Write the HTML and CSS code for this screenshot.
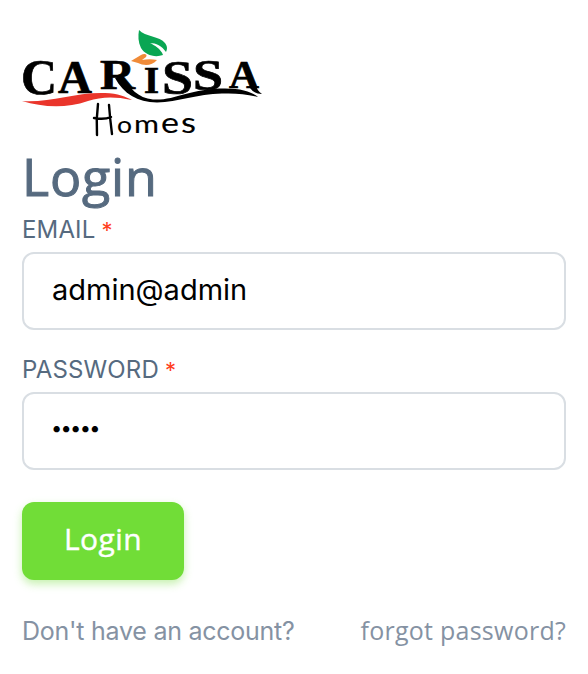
FILE: index.html
```html
<!DOCTYPE html>
<html lang="en">
<head>
<meta charset="utf-8">
<meta name="viewport" content="width=device-width, initial-scale=1">
<title>Login</title>
<link rel="stylesheet" href="styles.css">
</head>
<body>
<main class="login">
  <svg class="logo" viewBox="22 28 240 108" role="img" aria-label="Carissa Homes">
    <g class="logo-name">
      <text x="21" y="94" font-size="51" textLength="36" lengthAdjust="spacingAndGlyphs">C</text>
      <text x="58" y="93" font-size="47" textLength="34" lengthAdjust="spacingAndGlyphs">A</text>
      <text x="100" y="89" font-size="43" textLength="35" lengthAdjust="spacingAndGlyphs">R</text>
      <text x="144" y="93" font-size="38" textLength="15" lengthAdjust="spacingAndGlyphs">I</text>
      <text x="162" y="94" font-size="48" textLength="31" lengthAdjust="spacingAndGlyphs">S</text>
      <text x="193" y="90" font-size="44" textLength="30" lengthAdjust="spacingAndGlyphs">S</text>
      <text x="229" y="88" font-size="40" textLength="30" lengthAdjust="spacingAndGlyphs">A</text>
    </g>
    <path d="M115 78L123 76C129 88 138 98 153 99.5C174 101 190 88.5 225 88.5C242 88.5 252 92 258 97C246 94 236 93 222 93.5C197 94 178 102 157 102.5C137 102 124 94 115 78Z"/>
    <path d="M250 80L255 83Q257 91 262 94Q254 94 250 88Z"/>
    <path fill="#ea352b" d="M22 101C50 103 75 92 105 93C118 93 126 97 132 100C113 96 101 97 88 101C65 109 42 107 22 101Z"/>
    <path fill="#0aa653" d="M139 30C145 37 160 36 165 43C168 47 167 50 166 52C162 46 156 43 150 43C154 45 161 49 163 55C155 58 145 55 141 48C138 42 138 36 139 30Z"/>
    <path fill="#f08b38" d="M131 61L141 55C144 53 148 54 146 57L142 60C147 59 152 59 157 60C152 66 144 66 138 63Z"/>
    <g class="logo-sub">
      <path d="M98 104Q96 119 97 135M109 105Q110 119 112 134M94 118Q104 120 111 117"/>
      <text x="117" y="133" font-size="23" textLength="15" lengthAdjust="spacingAndGlyphs">o</text>
      <text x="134" y="133" font-size="25" textLength="25" lengthAdjust="spacingAndGlyphs">m</text>
      <text x="161" y="133" font-size="28" textLength="18" lengthAdjust="spacingAndGlyphs">e</text>
      <text x="181" y="133" font-size="29" textLength="15" lengthAdjust="spacingAndGlyphs">s</text>
    </g>
  </svg>
  <h1 class="title">Login</h1>
  <form class="form">
    <label class="label" for="email"><span class="email-name">EMAIL</span><span class="required">*</span></label>
    <input class="input" id="email" type="text" value="admin@admin">
    <label class="label label-password" for="password"><span class="password-name">PASSWORD</span><span class="required">*</span></label>
    <input class="input input-password" id="password" type="text" value="•••••">
    <button class="button" type="button">Login</button>
  </form>
  <nav class="links"><a class="register">Don't have an account?</a><a class="forgot">forgot password?</a></nav>
</main>
</body>
</html>
```
FILE: styles.css
```css
* { box-sizing: border-box; }
body { margin: 0; background: #fff; font-family: Inter, sans-serif; }
.login { padding: 28px 22px 0; }
.logo { display: block; width: 240px; height: 108px; overflow: visible; }
.logo-name { font-family: "Liberation Serif", serif; font-weight: bold; stroke: #000; stroke-width: 0.7; }
.logo-sub { font-family: Lato, sans-serif; stroke: #000; stroke-width: 0.1; }
.logo-sub path { fill: none; stroke-width: 2.4; stroke-linecap: round; }
.title { height: 80px; margin: 0; color: #566a7f; font: 500 52px/79px "Open Sans", sans-serif; letter-spacing: 0.8px; -webkit-text-stroke: 1px #566a7f; }
.form { display: flex; flex-direction: column; align-items: flex-start; }
.label { display: flex; gap: 6px; height: 36px; color: #566a7f; font-size: 24px; line-height: 28px; letter-spacing: 0.15px; }
.label-password { margin-top: 26px; }
.required { color: #ff3e1d; font-size: 22px; }
.input { width: 100%; height: 78px; padding: 0 29px 4px 28px; border: 2px solid #d9dee3; border-radius: 12px; background: #fff; color: #000; font: 29px Inter, sans-serif; outline: none; }
.input-password { padding: 0 27px 6px; font-size: 20px; letter-spacing: -1.7px; }
.button { width: 162px; height: 78px; margin-top: 32px; padding: 0 0 6px; border: 0; border-radius: 12px; background: #71dd37; box-shadow: 0 4px 8px rgba(113, 221, 55, 0.4); color: #fff; font: 30px "Open Sans", sans-serif; letter-spacing: 0.4px; -webkit-text-stroke: 0.4px #fff; }
.links { display: flex; justify-content: space-between; margin-top: 34px; color: #8592a3; font-size: 25px; line-height: 34px; white-space: nowrap; }
.register { letter-spacing: -0.25px; }
.forgot { font-family: "Open Sans", sans-serif; line-height: 32px; letter-spacing: 0.25px; }
```
